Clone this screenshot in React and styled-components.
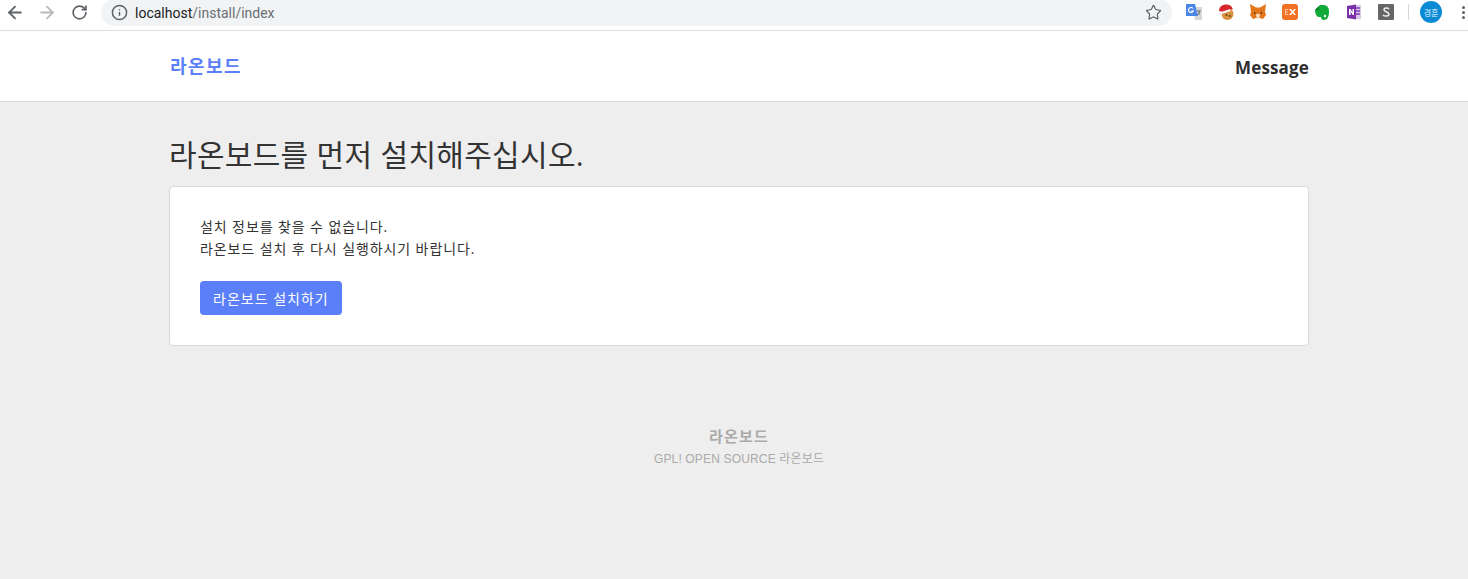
import React from 'react';
import styled, { createGlobalStyle } from 'styled-components';
import { ArrowLeft, ArrowRight, RotateCw, Info, Star } from 'lucide-react';

const GlobalStyle = createGlobalStyle`
  html, body {
    margin: 0;
    padding: 0;
    height: 100%;
    background: #eeeeee;
    overflow: hidden;
  }
  #root {
    height: 100%;
  }
  * {
    box-sizing: border-box;
  }
`;

const Page = styled.div`
  height: 579px;
  display: flex;
  flex-direction: column;
  background: #eeeeee;
  color: #333;
  font-family: 'Open Sans', 'Noto Sans CJK KR', sans-serif;
`;

// Browser chrome
const BrowserBar = styled.div`
  height: 31px;
  flex: none;
  display: flex;
  align-items: flex-start;
  background: #fff;
  border-bottom: 1px solid #dadce0;
`;

const NavIcons = styled.div`
  display: flex;
  align-items: center;
  gap: 12px;
  height: 24px;
  padding-left: 5px;
`;

const NavIcon = styled.span`
  width: 20px;
  height: 20px;
  display: flex;
  align-items: center;
  justify-content: center;
  color: ${(props) => (props.$disabled ? '#bababa' : '#5f6368')};
`;

const Omnibox = styled.div`
  width: 1071px;
  height: 27px;
  margin: -1px 0 0 12px;
  padding: 0 10px;
  display: flex;
  align-items: center;
  background: #f1f3f4;
  border-radius: 14px;
  color: #5f6368;
`;

const Url = styled.span`
  margin-left: 7px;
  flex: 1;
  font-family: Roboto, sans-serif;
  font-size: 14px;
  color: #6b6f73;
`;

const Host = styled.span`
  color: #202124;
`;

const Extensions = styled.div`
  display: flex;
  align-items: center;
  height: 24px;
  margin-left: 14px;
  gap: 16px;
`;

const Ext = styled.svg`
  width: 16px;
  height: 16px;
  display: block;
`;

const Divider = styled.span`
  width: 1px;
  height: 16px;
  margin-left: -2px;
  background: #d5d7da;
`;

const Avatar = styled.span`
  width: 22px;
  height: 22px;
  margin-left: -5px;
  border-radius: 50%;
  background: #0b8bd6;
  color: #e6f3fb;
  display: flex;
  align-items: center;
  justify-content: center;
  font-family: 'Noto Sans CJK KR', sans-serif;
  font-size: 8px;
`;

const Dots = styled.span`
  margin-left: 4px;
  display: flex;
  flex-direction: column;
  gap: 2px;
  i {
    width: 3px;
    height: 3px;
    border-radius: 50%;
    background: #5f6368;
    display: block;
  }
`;

// Site
const Navbar = styled.header`
  height: 71px;
  flex: none;
  background: #fff;
  border-bottom: 1px solid #d9d9d9;
`;

const Container = styled.div`
  width: 1140px;
  margin: 0 auto;
  position: relative;
  left: 5px;
`;

const NavInner = styled(Container)`
  height: 70px;
  display: flex;
  align-items: center;
  justify-content: space-between;
`;

const Brand = styled.a`
  font-size: 18px;
  font-weight: 700;
  letter-spacing: 1.4px;
  margin-left: 1px;
  color: #5a7ff8;
  position: relative;
  top: -1px;
`;

const NavLink = styled.a`
  font-size: 17px;
  font-weight: 700;
  letter-spacing: 0.15px;
  color: #2f2f2f;
  position: relative;
  top: 1px;
`;

const Main = styled(Container)`
  padding-top: 31px;
`;

const Title = styled.h1`
  margin: 0 0 10px;
  font-size: 30px;
  font-weight: 400;
  line-height: 43px;
  letter-spacing: 0.3px;
  color: #333;
`;

const Card = styled.section`
  height: 160px;
  padding: 29px 30px 30px;
  background: #fff;
  border: 1px solid #d9d9d9;
  border-radius: 4px;
`;

const Text = styled.p`
  margin: 0 0 21px;
  font-size: 14px;
  line-height: 22px;
  letter-spacing: 0.9px;
  color: #333;
`;

const Button = styled.button`
  height: 34px;
  padding: 0 13px;
  border: none;
  border-radius: 4px;
  background: #5a7ff8;
  color: #fff;
  font-family: inherit;
  font-size: 14px;
  letter-spacing: 1px;
  cursor: pointer;
`;

const Footer = styled.footer`
  margin-top: 79px;
  text-align: center;
  color: #aaaaaa;
`;

const FooterTitle = styled.div`
  font-size: 15px;
  font-weight: 700;
  line-height: 23px;
  letter-spacing: 1.2px;
`;

const FooterText = styled.div`
  font-family: 'Liberation Sans', 'Noto Sans CJK KR', sans-serif;
  font-size: 12px;
  line-height: 22px;
  letter-spacing: 0.16px;
`;

function Extension({ children }) {
  return <Ext viewBox="0 0 16 16">{children}</Ext>;
}

function App() {
  return (
    <Page>
      <GlobalStyle />
      <BrowserBar>
        <NavIcons>
          <NavIcon><ArrowLeft size={21} strokeWidth={2.2} /></NavIcon>
          <NavIcon $disabled><ArrowRight size={21} strokeWidth={2.2} /></NavIcon>
          <NavIcon><RotateCw size={17} strokeWidth={2.4} /></NavIcon>
        </NavIcons>
        <Omnibox>
          <Info size={17} strokeWidth={2.1} />
          <Url><Host>localhost</Host>/install/index</Url>
          <Star size={17} strokeWidth={1.7} />
        </Omnibox>
        <Extensions>
          <Extension>
            <path d="M6 3h10v13H9z" fill="#d5d7da" />
            <path d="M0 0h9l3 12H0z" fill="#4a86e8" />
            <path d="M7 4.500A2.500 2.500 0 1 0 7.300 7H5.200" fill="none" stroke="#fff" strokeWidth="1.200" />
            <path d="M11 7h4M13 6v5M11 11l3-3" stroke="#777" strokeWidth="1" fill="none" />
          </Extension>
          <Extension>
            <circle cx="9.500" cy="10" r="6" fill="#d9913f" />
            <path d="M1 7C1 1 8-1 13 2l2 3-3 1-7 2z" fill="#d8262c" />
            <path d="M0 9l12-4 1 2L1 11z" fill="#f2f2f2" />
            <circle cx="8.500" cy="11" r="1" fill="#6b3f12" />
            <circle cx="12" cy="12" r="1" fill="#6b3f12" />
          </Extension>
          <Extension>
            <path d="M0 0l6 3.500h4L16 0l-1 8 1 3-3 4-3-1H6l-3 1-3-4 1-3z" fill="#e2761b" />
            <path d="M6 10h4l-1 5H7z" fill="#f5e0c8" />
            <path d="M4 8l2 1-2 1zM12 8l-2 1 2 1z" fill="#33261a" />
          </Extension>
          <Extension>
            <rect width="16" height="16" rx="3" fill="#f07325" />
            <path d="M3 5h3v1H4v1.500h2v1H4V10h2v1H3z" fill="#f9c6a2" />
            <path d="M7 5h2l1.500 2L12 5h2l-2.500 3 2.500 3h-2l-1.500-2L9 11H7l2.500-3z" fill="#fff" />
          </Extension>
          <Extension>
            <path d="M3 4l3-3h3c4 0 6 2 6 7 0 5-2 8-5 8-2 0-3-1-3-3H5C2 13 1 8 1 6z" fill="#12ab3b" />
            <path d="M1 6h4V2z" fill="#0b7f2b" />
            <circle cx="11" cy="12" r="1.200" fill="#fff" />
          </Extension>
          <Extension>
            <path d="M8 1h7v14H8z" fill="#d9c7ea" />
            <path d="M10 4h4M10 7h4M10 10h4" stroke="#7f3fb0" strokeWidth="1.500" />
            <path d="M1 2l9-1.500v15L1 14z" fill="#7b2fa8" />
            <path d="M3 11V5h1.500l2 3.500V5H8v6H6.700l-2.200-3.500V11z" fill="#fff" />
          </Extension>
          <Extension>
            <rect width="16" height="16" rx="1" fill="#666" />
            <path d="M11 5c-1-1.200-5-1.500-5 .8C6 8 11 7.500 11 10.300 11 12.500 6.500 12.500 5 11" fill="none" stroke="#eee" strokeWidth="1.500" />
          </Extension>
          <Divider />
          <Avatar>경훈</Avatar>
          <Dots><i /><i /><i /></Dots>
        </Extensions>
      </BrowserBar>

      <Navbar>
        <NavInner>
          <Brand>라온보드</Brand>
          <NavLink>Message</NavLink>
        </NavInner>
      </Navbar>

      <Main>
        <Title>라온보드를 먼저 설치해주십시오.</Title>
        <Card>
          <Text>
            설치 정보를 찾을 수 없습니다.
            <br />
            라온보드 설치 후 다시 실행하시기 바랍니다.
          </Text>
          <Button>라온보드 설치하기</Button>
        </Card>
        <Footer>
          <FooterTitle>라온보드</FooterTitle>
          <FooterText>GPL! OPEN SOURCE 라온보드</FooterText>
        </Footer>
      </Main>
    </Page>
  );
}

export default App;
